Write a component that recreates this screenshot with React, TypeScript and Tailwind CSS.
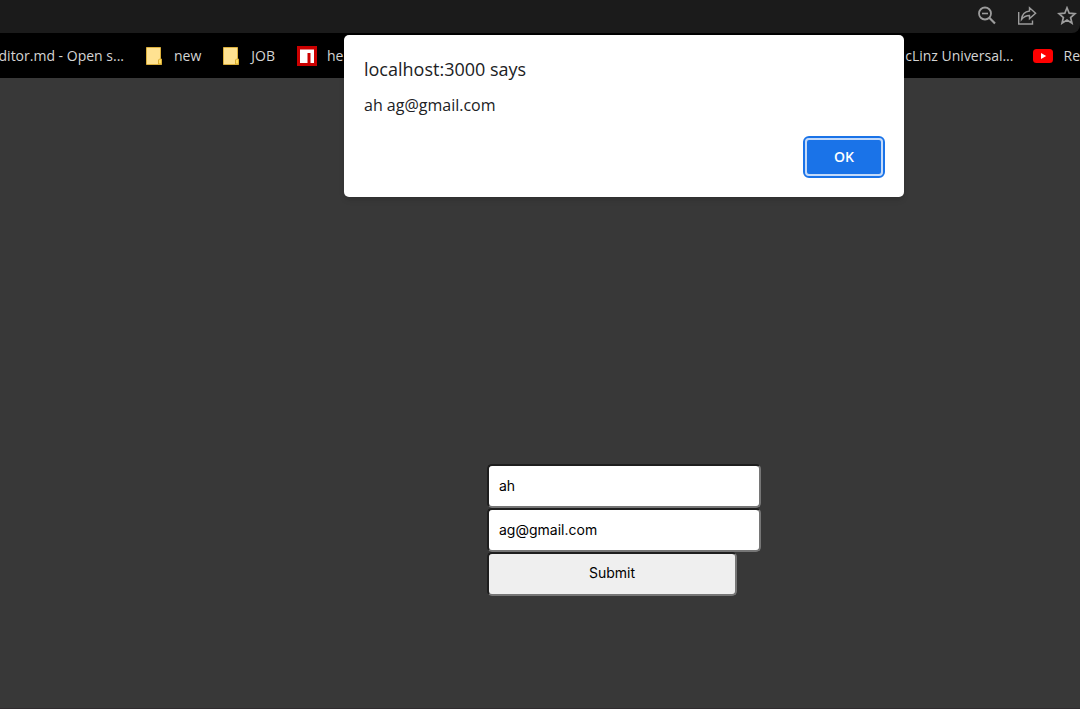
import { useState } from "react";

function FolderIcon() {
  return (
    <svg className="h-5 w-4 shrink-0" viewBox="0 0 16 20" aria-hidden="true">
      <path d="M.5 1.500H14.500V13.500L15.500 14V18.500H.5Z" fill="#ffe291" stroke="#dcb03c" />
      <path d="M12.500 18V14L13.500 13H15.500V18Z" fill="#ffe066" stroke="#d9ad35" />
    </svg>
  );
}

function NpmIcon() {
  return (
    <svg className="size-5 shrink-0" viewBox="0 0 20 20" aria-hidden="true">
      <path d="M0 0H20V20H0Z" fill="#cb0000" />
      <path d="M3 3.500H17V17H13.500V7H10.500V17H3Z" fill="#fff" />
    </svg>
  );
}

function YouTubeIcon() {
  return (
    <svg className="size-5 shrink-0" viewBox="0 0 20 20" aria-hidden="true">
      <rect y="3" width="20" height="14" rx="3.500" fill="#f00" />
      <path d="M8 7L13.200 10L8 13Z" fill="#fff" />
    </svg>
  );
}

const toolButton = "flex size-5 shrink-0 items-center justify-center text-[#9c9c9c]";
const bookmark = "flex shrink-0 items-center whitespace-nowrap";
const field =
  "h-11 rounded-[5px] border-2 border-t-[#1e1e1e] border-l-[#1e1e1e] border-r-[#767676] border-b-[#767676] pb-0.5 font-['Inter','Open_Sans',sans-serif] text-sm text-black outline-none";

export default function App() {
  const [name, setName] = useState("ah");
  const [email, setEmail] = useState("ag@gmail.com");

  return (
    <div className="relative flex min-h-screen flex-col overflow-hidden bg-[#383838] font-['Open_Sans','Noto_Sans',sans-serif]">
      <header className="bg-black">
        <div className="flex h-[33px] items-center justify-end gap-5 rounded-br-lg bg-[#1b1b1b] pr-[3px] pb-0.5">
          <button type="button" aria-label="Zoom out" className={toolButton}>
            <svg className="size-5" viewBox="0 0 20 20" fill="none" stroke="currentColor">
              <circle cx="8" cy="7.500" r="6" strokeWidth="1.800" />
              <path d="M5 7.500H11" strokeWidth="1.600" />
              <path d="M12.300 11.800L18 17.500" strokeWidth="2.200" />
            </svg>
          </button>
          <button type="button" aria-label="Share" className={toolButton}>
            <svg className="size-5" viewBox="0 0 20 20" fill="none" stroke="currentColor" strokeWidth="1.400">
              <path d="M1.700 6V18H15.500V14.500" />
              <path d="M12.500 1.800L18.600 7.300L12.500 12.600V9.500C9 9.500 6.700 10.700 4.500 13.500C5 8.500 7.800 5.500 12.500 5Z" />
            </svg>
          </button>
          <button type="button" aria-label="Bookmark" className={toolButton}>
            <svg className="size-5" viewBox="0 0 20 20" fill="none" stroke="currentColor" strokeWidth="1.700">
              <path d="M10 1.800L12.200 7.200L18 7.700L13.600 11.500L15 17.200L10 14.100L5 17.200L6.400 11.500L2 7.700L7.800 7.200Z" />
            </svg>
          </button>
        </div>
        <nav aria-label="Bookmarks" className="flex h-[45px] items-center justify-between text-sm text-[#d4d4d4]">
          <div className="flex items-center gap-[22px]">
            <a href="#editor" className="flex w-[124px] justify-end whitespace-nowrap">
              ditor.md - Open s...
            </a>
            <a href="#new" className={`${bookmark} gap-3`}>
              <FolderIcon />
              new
            </a>
            <a href="#job" className={`${bookmark} gap-3`}>
              <FolderIcon />
              JOB
            </a>
            <a href="#npm" className={`${bookmark} gap-2.5`}>
              <NpmIcon />
              he
            </a>
          </div>
          <div className="flex items-center gap-5">
            <a href="#universal" className={bookmark}>
              cLinz Universal...
            </a>
            <a href="#youtube" className={`${bookmark} gap-2.5`}>
              <YouTubeIcon />
              Re
            </a>
          </div>
        </nav>
      </header>

      <main className="flex grow flex-col items-center justify-end border-b border-[#302c2f] pb-28 pl-42">
        <form className="flex w-[274px] flex-col" onSubmit={(e) => e.preventDefault()}>
          <input
            type="text"
            aria-label="Name"
            value={name}
            onChange={(e) => setName(e.target.value)}
            className={`${field} w-full bg-white px-2.5`}
          />
          <input
            type="email"
            aria-label="Email"
            value={email}
            onChange={(e) => setEmail(e.target.value)}
            className={`${field} w-full bg-white px-2.5`}
          />
          <button type="submit" className={`${field} w-[250px] bg-[#efefef]`}>
            Submit
          </button>
        </form>
      </main>

      <div className="absolute inset-x-0 top-[35px] flex justify-center pl-42">
        <div
          role="alertdialog"
          aria-labelledby="alert-title"
          aria-describedby="alert-message"
          className="flex w-[560px] flex-col rounded-[5px] bg-white pt-5 pr-[21px] pb-[21px] pl-5 text-[#202124] shadow-md"
        >
          <h1 id="alert-title" className="text-lg leading-7">
            localhost:3000 says
          </h1>
          <p id="alert-message" className="mt-2.5 text-base leading-6">
            {name} {email}
          </p>
          <button
            type="button"
            className="mt-[21px] flex h-[38px] w-[78px] items-center justify-center self-end rounded-[4px] border-2 border-[#c5dbfa] bg-[#1a73e8] text-sm font-semibold text-white outline-2 outline-[#1a73e8]"
          >
            OK
          </button>
        </div>
      </div>
    </div>
  );
}
